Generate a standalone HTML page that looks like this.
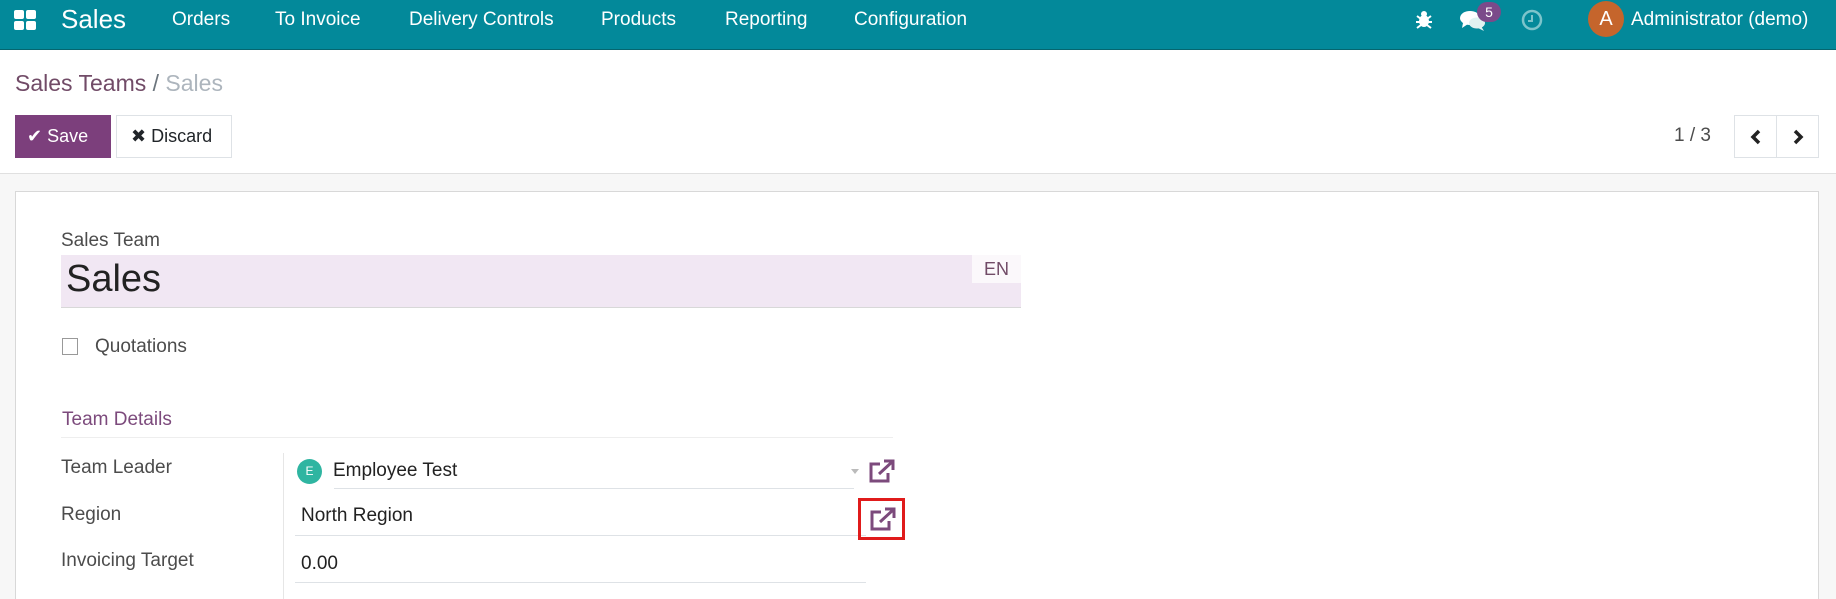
<!DOCTYPE html>
<html><head><meta charset="utf-8"><style>
*{margin:0;padding:0;box-sizing:border-box}
html,body{width:1836px;height:599px;overflow:hidden}
body{font-family:"Liberation Sans",sans-serif;background:#fff;position:relative;color:#212529}
.a{position:absolute;white-space:nowrap}
.nav{position:absolute;left:0;top:0;width:1836px;height:50px;background:#03899a;border-bottom:1px solid #05666f}
.ni{position:absolute;top:0;line-height:40px;font-size:19px;color:#fff}
.lbl{font-size:19px;color:#4c4c4c}
.ul{position:absolute;height:1px;background:#dee2e6}
</style></head><body>
<div class="nav">
 <svg class="a" style="left:14px;top:10px" width="23" height="21" viewBox="0 0 23 21"><rect x="0" y="0" width="10" height="9" rx="2" fill="#fff"/><rect x="12" y="0" width="10" height="9" rx="2" fill="#fff"/><rect x="0" y="11" width="10" height="9" rx="2" fill="#fff"/><rect x="12" y="11" width="10" height="9" rx="2" fill="#fff"/></svg>
 <div class="ni" style="left:61px;font-size:26px;line-height:38px">Sales</div>
 <div class="ni" style="left:172px">Orders</div>
 <div class="ni" style="left:275px">To Invoice</div>
 <div class="ni" style="left:409px">Delivery Controls</div>
 <div class="ni" style="left:601px">Products</div>
 <div class="ni" style="left:725px">Reporting</div>
 <div class="ni" style="left:854px">Configuration</div>
 <svg class="a" style="left:1414px;top:9px" width="20" height="20" viewBox="0 0 20 20"><ellipse cx="10" cy="12" rx="5" ry="6" fill="#fff"/><circle cx="10" cy="5" r="3" fill="#fff"/><path d="M3 7l4 3M17 7l-4 3M2 13h5M18 13h-5M3 19l4-3M17 19l-4-3" stroke="#fff" stroke-width="2"/></svg>
 <svg class="a" style="left:1460px;top:10px" width="26" height="22" viewBox="0 0 26 22"><ellipse cx="10" cy="8" rx="10" ry="7" fill="#fff"/><path d="M3 13l-1 5 6-4z" fill="#fff"/><ellipse cx="17" cy="13" rx="8" ry="5.5" fill="#e0f2f1"/><path d="M21 16l3 5-6-3z" fill="#e0f2f1"/></svg>
 <div class="a" style="left:1477px;top:2px;width:24px;height:20px;border-radius:10px;background:#7b4a8a;color:#fff;font-size:14px;text-align:center;line-height:20px">5</div>
 <svg class="a" style="left:1521px;top:9px" width="22" height="22" viewBox="0 0 22 22"><circle cx="11" cy="11" r="9" fill="none" stroke="#7cc4cb" stroke-width="2.5"/><path d="M11 6v6h-4" stroke="#7cc4cb" stroke-width="2" fill="none"/></svg>
 <div class="a" style="left:1588px;top:1px;width:36px;height:36px;border-radius:18px;background:#c5652c;color:#fff;font-size:20px;text-align:center;line-height:36px">A</div>
 <div class="ni" style="left:1631px">Administrator (demo)</div>
</div>
<div class="a" style="left:15px;top:70px;font-size:23px;color:#714b67">Sales Teams <span style="color:#6c757d">/</span> <span style="color:#adb5bd">Sales</span></div>
<div class="a" style="left:15px;top:115px;width:96px;height:43px;background:#7c3f7c;color:#fff;font-size:18px;line-height:43px;padding-left:12px">✔ Save</div>
<div class="a" style="left:116px;top:115px;width:116px;height:43px;border:1px solid #dee2e6;font-size:18px;line-height:41px;padding-left:14px">✖ Discard</div>
<div class="a" style="left:1674px;top:125px;font-size:19px;color:#4c4c4c">1 / 3</div>
<div class="a" style="left:1734px;top:115px;width:85px;height:43px;border:1px solid #dee2e6"><div class="a" style="left:41px;top:0;width:1px;height:41px;background:#dee2e6"></div>
<svg class="a" style="left:14px;top:13px" width="14" height="16" viewBox="0 0 14 16"><path d="M10 2L4 8l6 6" stroke="#222" stroke-width="3.5" fill="none"/></svg>
<svg class="a" style="left:56px;top:13px" width="14" height="16" viewBox="0 0 14 16"><path d="M4 2l6 6-6 6" stroke="#222" stroke-width="3.5" fill="none"/></svg></div>
<div class="a" style="left:0;top:173px;width:1836px;height:426px;background:#f7f7f7;border-top:1px solid #e0e0e0"></div>
<div class="a" style="left:15px;top:191px;width:1804px;height:408px;background:#fff;border:1px solid #d8d8d8;border-bottom:none"></div>
<div class="a lbl" style="left:61px;top:230px">Sales Team</div>
<div class="a" style="left:61px;top:255px;width:960px;height:53px;background:#f1e7f3;border-bottom:1px solid #d8d8d8"></div>
<div class="a" style="left:66px;top:258px;font-size:38px;color:#222">Sales</div>
<div class="a" style="left:972px;top:255px;width:49px;height:28px;background:#fbf8fb;color:#714b67;font-size:18px;line-height:28px;text-align:center">EN</div>
<div class="a" style="left:62px;top:338px;width:16px;height:17px;border:1px solid #999"></div>
<div class="a lbl" style="left:95px;top:336px">Quotations</div>
<div class="a" style="left:62px;top:409px;font-size:19px;color:#7c4a7c">Team Details</div>
<div class="ul" style="left:61px;top:437px;width:832px;background:#eee"></div>
<div class="a" style="left:283px;top:453px;width:1px;height:146px;background:#e6e6e6"></div>
<div class="a lbl" style="left:61px;top:457px">Team Leader</div>
<div class="a lbl" style="left:61px;top:504px">Region</div>
<div class="a lbl" style="left:61px;top:550px">Invoicing Target</div>
<div class="a" style="left:297px;top:459px;width:25px;height:25px;border-radius:13px;background:#2fb5a1;color:#fff;font-size:12px;text-align:center;line-height:25px">E</div>
<div class="a" style="left:333px;top:460px;font-size:19px;color:#222">Employee Test</div>
<div class="ul" style="left:334px;top:488px;width:520px"></div>
<div class="a" style="left:301px;top:505px;font-size:19px;color:#222">North Region</div>
<div class="ul" style="left:295px;top:535px;width:571px"></div>
<div class="a" style="left:301px;top:553px;font-size:19px;color:#222">0.00</div>
<div class="ul" style="left:295px;top:582px;width:571px"></div>
<div class="a" style="left:851px;top:469px;width:0;height:0;border-left:4px solid transparent;border-right:4px solid transparent;border-top:5px solid #bbb"></div>
<svg class="a" style="left:867px;top:459px" width="29" height="25" viewBox="0 0 29 25"><path d="M13 5H4v17h17v-8" stroke="#7c4a7c" stroke-width="3" fill="none"/><path d="M12 15L25 3M17 2h9v9" stroke="#7c4a7c" stroke-width="3" fill="none"/></svg>
<svg class="a" style="left:868px;top:507px" width="29" height="25" viewBox="0 0 29 25"><path d="M13 5H4v17h17v-8" stroke="#7c4a7c" stroke-width="3" fill="none"/><path d="M12 15L25 3M17 2h9v9" stroke="#7c4a7c" stroke-width="3" fill="none"/></svg>
<div class="a" style="left:858px;top:498px;width:47px;height:42px;border:3px solid #e01b1b"></div>
</body></html>
